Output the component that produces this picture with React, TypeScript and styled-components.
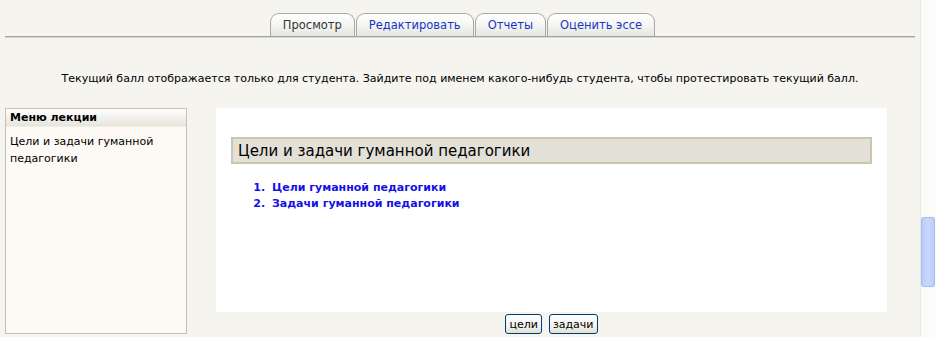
import * as React from "react";
import styled, { createGlobalStyle } from "styled-components";

const GlobalStyle = createGlobalStyle`
  html, body {
    margin: 0;
    padding: 0;
    background: #f5f4ef;
    font-family: "DejaVu Sans", Tahoma, sans-serif;
    font-size: 11px;
    color: #000;
  }
`;

const Frame = styled.div`
  display: flex;
  width: 936px;
  height: 337px;
  overflow: hidden;
`;

const Page = styled.div`
  flex: 1;
  display: flex;
  flex-direction: column;
  min-width: 0;
`;

/* tab strip */
const TabBar = styled.div`
  display: flex;
  justify-content: center;
  margin: 0 5px;
  padding: 13px 0 0 6px;
  border-bottom: 1px solid #a3a3a3;
  box-shadow: 0 1px 0 #d6d6d2;
`;

const Tab = styled.div<{ $active?: boolean }>`
  height: 22px;
  padding: 0 12px;
  margin-right: 1px;
  display: flex;
  align-items: center;
  border: 1px solid #a8a8a8;
  border-bottom: none;
  border-radius: 9px 9px 0 0;
  background: linear-gradient(#ffffff, #f4f4f2 55%, #e4e4e0);
  color: ${(p) => (p.$active ? "#333" : "#1536c8")};
  font-size: 11.5px;
  white-space: nowrap;
`;

const Notice = styled.div`
  margin-top: 35px;
  text-align: center;
  font-size: 11px;
  line-height: 14px;
`;

const Body = styled.div`
  display: flex;
  gap: 29px;
  margin: 22px 0 0 5px;
`;

/* left block */
const Menu = styled.div`
  width: 180px;
  height: 224px;
  border: 1px solid #c9c2a8;
  background: #fdf9f4;
`;

const MenuHead = styled.div`
  height: 17px;
  padding-left: 4px;
  display: flex;
  align-items: center;
  font-weight: bold;
  font-size: 11px;
  background: linear-gradient(#ffffff, #e6e4dc);
  border-bottom: 1px solid #efede6;
`;

const MenuItem = styled.div`
  padding: 6px 4px 0 4px;
  font-size: 11px;
  line-height: 17px;
`;

/* centre */
const Column = styled.div`
  width: 671px;
  display: flex;
  flex-direction: column;
  align-items: center;
`;

const Sheet = styled.div`
  align-self: stretch;
  height: 204px;
  background: #ffffff;
  padding: 29px 15px 0 15px;
  box-sizing: border-box;
`;

const Heading = styled.div`
  height: 27px;
  box-sizing: border-box;
  border: 2px solid #cbc6ae;
  background: #e3e0d7;
  padding-left: 5px;
  display: flex;
  align-items: center;
  font-size: 15px;
`;

const List = styled.ol`
  margin: 16px 0 0 0;
  padding-left: 38px;
  font-weight: bold;
  font-size: 11px;
  line-height: 16px;
  color: #1212e6;
`;

const Item = styled.li`
  padding-left: 3px;
`;

const Buttons = styled.div`
  display: flex;
  gap: 7px;
  margin-top: 2px;
`;

const Button = styled.button`
  height: 20px;
  padding: 0 3px;
  border: 1px solid #003c74;
  border-radius: 3px;
  background: linear-gradient(#ffffff, #f3f2ec 60%, #e3e1d6);
  font-family: "DejaVu Sans", Tahoma, sans-serif;
  font-size: 11px;
  color: #000;
`;

/* scrollbar */
const Scroll = styled.div`
  width: 16px;
  border-left: 1px solid #e9e8e1;
  background: #fbfbf9;
  display: flex;
  flex-direction: column;
  padding-top: 217px;
  box-sizing: border-box;
`;

const Thumb = styled.div`
  width: 14px;
  height: 70px;
  box-sizing: border-box;
  border: 1px solid #a9bdee;
  border-radius: 2px;
  background: linear-gradient(90deg, #b9cdf9, #c7d8fd 50%, #bccef8);
`;

export default function App() {
  const tabs = ["Просмотр", "Редактировать", "Отчеты", "Оценить эссе"];
  return (
    <>
      <GlobalStyle />
      <Frame>
        <Page>
          <TabBar>
            {tabs.map((t, i) => (
              <Tab key={t} $active={i === 0}>
                {t}
              </Tab>
            ))}
          </TabBar>
          <Notice>
            Текущий балл отображается только для студента. Зайдите под именем какого-нибудь студента, чтобы
            протестировать текущий балл.
          </Notice>
          <Body>
            <Menu>
              <MenuHead>Меню лекции</MenuHead>
              <MenuItem>Цели и задачи гуманной педагогики</MenuItem>
            </Menu>
            <Column>
              <Sheet>
                <Heading>Цели и задачи гуманной педагогики</Heading>
                <List>
                  <Item>Цели гуманной педагогики</Item>
                  <Item>Задачи гуманной педагогики</Item>
                </List>
              </Sheet>
              <Buttons>
                <Button>цели</Button>
                <Button>задачи</Button>
              </Buttons>
            </Column>
          </Body>
        </Page>
        <Scroll>
          <Thumb />
        </Scroll>
      </Frame>
    </>
  );
}
